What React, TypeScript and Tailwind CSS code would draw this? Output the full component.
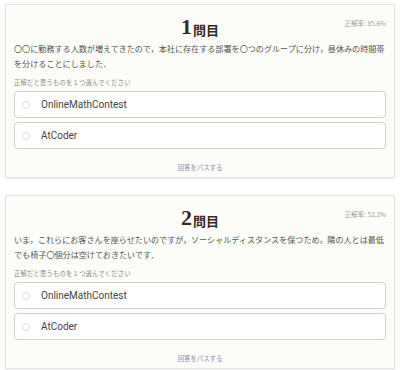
import React from 'react';

interface Question {
  no: number;
  rate: string;
  lines: string[];
  options: string[];
}

const questions: Question[] = [
  {
    no: 1,
    rate: '85.6%',
    lines: [
      '〇〇に勤務する人数が増えてきたので，本社に存在する部署を〇つのグループに分け，昼休みの時間帯',
      'を分けることにしました．',
    ],
    options: ['OnlineMathContest', 'AtCoder'],
  },
  {
    no: 2,
    rate: '52.2%',
    lines: [
      'いま，これらにお客さんを座らせたいのですが，ソーシャルディスタンスを保つため，隣の人とは最低',
      'でも椅子〇個分は空けておきたいです．',
    ],
    options: ['OnlineMathContest', 'AtCoder'],
  },
];

function QuestionCard({ q }: { q: Question }) {
  return (
    <div className="relative bg-[#fcfcf8] border border-[#e6e6e2] shadow-[0_1px_2px_rgba(0,0,0,0.08)] px-2 pt-[7px] pb-[4px]">
      <div className="flex items-end justify-center h-[29px] text-[#3b2a1c]">
        <span className="text-[22px] leading-[29px] font-bold font-['Liberation_Serif',serif]">{q.no}</span>
        <span className="text-[13px] leading-[23px] font-bold ml-[1px]">問目</span>
      </div>
      <div className="absolute right-2 top-[14px] text-[6.5px] text-[#a0a0a0]">正解率: {q.rate}</div>
      <p className="text-[8.1px] leading-[15px] text-[#555] whitespace-nowrap">
        {q.lines[0]}
        <br />
        {q.lines[1]}
      </p>
      <p className="mt-[7px] text-[6.3px] leading-[10px] text-[#8a8a8a] tracking-[0.2px]">
        正解だと思うものを１つ選んでください
      </p>
      <div className="mt-[3px] flex flex-col gap-[4px]">
        {q.options.map((opt) => (
          <div
            key={opt}
            className="flex items-center h-[27px] bg-white border border-[#cfcfcf] rounded-[4px] pl-[7px]"
          >
            <span className="w-[8px] h-[8px] rounded-full border border-[#dcdcdc]" />
            <span className="ml-[11px] text-[10px] text-[#444] font-['Roboto','Liberation_Sans',sans-serif]">
              {opt}
            </span>
          </div>
        ))}
      </div>
      <div className="mt-[14px] text-center text-[6.4px] leading-[10px] text-[#8890a8]">回答をパスする</div>
    </div>
  );
}

export default function App() {
  return (
    <div className="w-[400px] min-h-[370px] bg-white px-[5px] pt-[4px] flex flex-col gap-[17px] font-['Noto_Sans_CJK_JP','Noto_Sans',sans-serif]">
      {questions.map((q) => (
        <QuestionCard key={q.no} q={q} />
      ))}
    </div>
  );
}
